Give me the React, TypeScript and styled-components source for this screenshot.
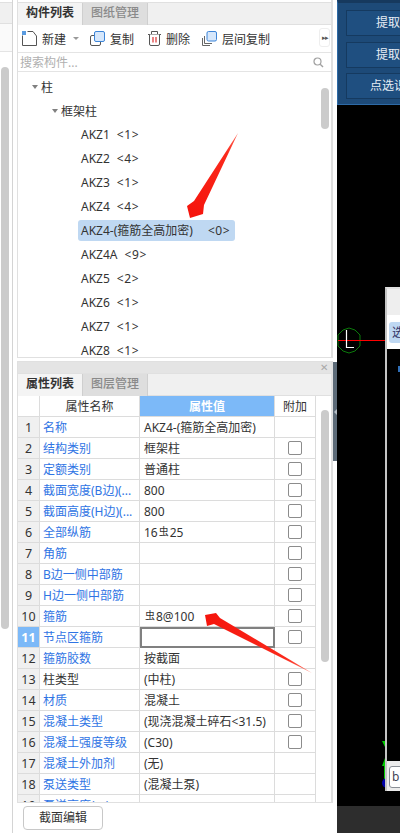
import React from "react";
import styled, { createGlobalStyle } from "styled-components";

const GlobalStyle = createGlobalStyle`
  html, body {
    margin: 0;
    padding: 0;
    height: 835px;
    overflow: hidden;
    background: #fff;
  }
  * {
    box-sizing: border-box;
  }
`;

const FONT = `"Noto Sans", "Noto Sans CJK SC", sans-serif`;

const Page = styled.div`
  position: relative;
  display: flex;
  width: 400px;
  height: 835px;
  overflow: hidden;
  font-family: ${FONT};
  font-size: 12px;
  color: #333;
  background: #fff;
`;

const LeftStrip = styled.div`
  width: 13px;
  height: 833px;
  flex: none;
  padding-top: 2px;
  background: #fff;
  border-right: 1px solid #d4d4d4;
  display: flex;
  flex-direction: column;
`;

const StripHead = styled.div`
  height: 22px;
  flex: none;
  background: #f0f0f0;
  border-top: 1px solid #e0e0e0;
  border-bottom: 1px solid #e0e0e0;
`;

const StripSub = styled.div`
  height: 28px;
  flex: none;
  background: #fafafa;
  border-bottom: 1px solid #e4e4e4;
`;

const StripBar = styled.div`
  width: 8px;
  height: 562px;
  margin: 15px 0 0 1px;
  border-radius: 4px;
  background: #cbcbcb;
`;

const Main = styled.div`
  width: 320px;
  flex: none;
  padding-left: 4px;
  display: flex;
  flex-direction: column;
`;

const Panel = styled.div`
  width: 316px;
  border: 1px solid #e0e0e0;
  border-top: none;
  border-right-width: 2px;
`;

const TopPanel = styled(Panel)`
  height: 358px;
  padding-top: 2px;
`;

const TabRow = styled.div`
  display: flex;
  height: 23px;
  background: #f0f0f0;
  border-top: 1px solid #e0e0e0;
  border-bottom: 1px solid #e0e0e0;
`;

const Tab = styled.div<{ $active?: boolean }>`
  width: 65px;
  height: 22px;
  line-height: 20px;
  text-align: center;
  font-size: 12px;
  font-weight: ${(p) => (p.$active ? 700 : 500)};
  color: ${(p) => (p.$active ? "#333" : "#8a8a8a")};
  background: ${(p) => (p.$active ? "#f4f4f4" : "#dedede")};
  border-right: 1px solid #cfcfcf;
`;

const Toolbar = styled.div`
  height: 28px;
  display: flex;
  align-items: center;
  padding-left: 4px;
  border-bottom: 1px solid #e4e4e4;
  position: relative;
`;

const ToolButton = styled.div<{ $gap: number }>`
  display: flex;
  align-items: center;
  gap: 5px;
  margin-right: ${(p) => p.$gap}px;
  white-space: nowrap;
  color: #333;
`;

const Caret = styled.span`
  display: inline-block;
  width: 0;
  height: 0;
  margin-left: 2px;
  border-left: 3px solid transparent;
  border-right: 3px solid transparent;
  border-top: 3px solid #999;
`;

const MoreButton = styled.div`
  position: absolute;
  right: 1px;
  top: 3px;
  width: 11px;
  height: 19px;
  border: 1px solid #eee;
  border-radius: 3px;
  font-size: 7px;
  line-height: 17px;
  text-align: center;
  color: #555;
  letter-spacing: -1px;
`;

const SearchRow = styled.div`
  height: 19px;
  display: flex;
  align-items: center;
  justify-content: space-between;
  padding: 0 7px 0 2px;
  color: #b0b0b0;
  border-bottom: 1px solid #e4e4e4;
`;

const Tree = styled.div`
  position: relative;
  height: 285px;
  overflow: hidden;
  padding-top: 3px;
`;

const TreeRow = styled.div<{ $indent: number }>`
  height: 24px;
  display: flex;
  align-items: center;
  padding-left: ${(p) => p.$indent}px;
  white-space: nowrap;
`;

const BranchRow = styled(TreeRow)`
  height: 23px;
`;

const TreeCaret = styled.span`
  width: 0;
  height: 0;
  margin-right: 3px;
  border-left: 3px solid transparent;
  border-right: 3px solid transparent;
  border-top: 4px solid #808080;
`;

const Item = styled.div<{ $selected?: boolean }>`
  display: flex;
  align-items: center;
  height: 21px;
  margin-left: ${(p) => (p.$selected ? -1 : 0)}px;
  padding: 0 ${(p) => (p.$selected ? 5 : 0)}px 0 ${(p) => (p.$selected ? 3 : 2)}px;
  border-radius: 3px;
  background: ${(p) => (p.$selected ? "#bfd8f2" : "transparent")};
`;

const Count = styled.span<{ $wide?: boolean }>`
  margin-left: ${(p) => (p.$wide ? 15 : 7)}px;
  letter-spacing: 0.6px;
`;

const TreeScroll = styled.div`
  position: absolute;
  right: 2px;
  top: 16px;
  width: 8px;
  height: 41px;
  border-radius: 4px;
  background: #cbcbcb;
`;

const PropsPanel = styled(Panel)`
  height: 442px;
  margin-top: 3px;
  display: flex;
  flex-direction: column;
  border-top: 1px solid #e0e0e0;
  border-bottom-width: 1px;
`;

const PanelHead = styled.div`
  height: 11px;
  flex: none;
  background: #e4e4e4;
  position: relative;
`;

const CloseMark = styled.span`
  position: absolute;
  right: 3px;
  top: -2px;
  font-size: 10px;
  line-height: 14px;
  color: #a8a8a8;
`;

const PropsBody = styled.div`
  flex: none;
  height: 407px;
  overflow: hidden;
  position: relative;
  border-bottom: 1px solid #e0e0e0;
`;

const Grid = styled.div`
  display: grid;
  grid-template-columns: 22px 100px 135px 41px;
  grid-auto-rows: 21px;
  width: 298px;
`;

const Cell = styled.div`
  display: flex;
  align-items: center;
  padding-left: 3px;
  white-space: nowrap;
  overflow: hidden;
  border-right: 1px solid #dcdcdc;
  border-bottom: 1px solid #dcdcdc;
`;

const HeadCell = styled(Cell)<{ $active?: boolean }>`
  justify-content: center;
  padding: 0;
  font-weight: ${(p) => (p.$active ? 700 : 400)};
  color: ${(p) => (p.$active ? "#fff" : "#333")};
  background: ${(p) => (p.$active ? "#7cb9f8" : "#fff")};
`;

const IndexCell = styled(Cell)<{ $active?: boolean }>`
  justify-content: center;
  padding: 0;
  font-size: 12.5px;
  font-weight: ${(p) => (p.$active ? 700 : 400)};
  color: ${(p) => (p.$active ? "#fff" : "#333")};
  background: ${(p) => (p.$active ? "#7cb9f8" : "#f0f0f0")};
`;

const NameCell = styled(Cell)<{ $plain?: boolean }>`
  color: ${(p) => (p.$plain ? "#333" : "#2f74e4")};
`;

const ValueCell = styled(Cell)<{ $editing?: boolean }>`
  padding-left: ${(p) => (p.$editing ? 0 : 4)}px;
  ${(p) => (p.$editing ? "border: 2px solid #808080;" : "")}
`;

const AddCell = styled(Cell)`
  justify-content: center;
  padding: 0;
`;

const Check = styled.span`
  width: 14px;
  height: 14px;
  border: 1px solid #8c8c8c;
  border-radius: 2px;
  background: #fff;
`;

const Steel = styled.span`
  font-size: 10px;
  line-height: 1;
  transform: translateY(-1px);
  margin: 0 1px;
`;

const PropsScroll = styled.div`
  position: absolute;
  right: 2px;
  top: 14px;
  width: 8px;
  height: 252px;
  border-radius: 4px;
  background: #cbcbcb;
`;

const EditButton = styled.div`
  width: 80px;
  height: 24px;
  margin: 3px 0 0 5px;
  border: 1px solid #c8c8c8;
  border-radius: 4px;
  text-align: center;
  line-height: 22px;
  color: #333;
  flex: none;
`;

const Gutter = styled.div`
  width: 4px;
  flex: none;
  position: relative;
  background: #fff;
`;

const Splitter = styled.div`
  position: absolute;
  left: 0;
  top: 362px;
  width: 4px;
  height: 99px;
  background: #5d6b78;

  &::after {
    content: "";
    position: absolute;
    left: 1px;
    top: 47px;
    border-top: 3px solid transparent;
    border-bottom: 3px solid transparent;
    border-right: 3px solid #b4bcc4;
  }
`;

const Canvas = styled.div`
  position: relative;
  flex: 1;
  height: 833px;
  background: #000;
  overflow: hidden;
`;

const CanvasFooter = styled.div`
  position: absolute;
  left: 0;
  right: 0;
  bottom: 0;
  height: 27px;
  background: #2d2d2d;
`;

const BluePanel = styled.div`
  position: absolute;
  left: 0;
  top: 0;
  width: 70px;
  height: 105px;
  padding: 7px 0 0 8px;
  background: #1d4a78;
  border: 1px solid #2d6aa6;
  border-top: 3px solid #16395e;
  display: flex;
  flex-direction: column;
  gap: 6px;
`;

const BlueButton = styled.div`
  width: 70px;
  height: 26px;
  flex: none;
  line-height: 24px;
  padding-left: 29px;
  white-space: nowrap;
  color: #e8eef5;
  background: #1f4f80;
  border: 1px solid #153a60;
`;

const BlueButtonWide = styled(BlueButton)`
  margin-top: -1px;
  padding-left: 23px;
`;

const SubWindow = styled.div`
  position: absolute;
  left: 48px;
  top: 287px;
  width: 30px;
  height: 504px;
  background: #000;
  border-left: 2px solid #c4c4c4;
  border-top: 2px solid #e0e0e0;
`;

const SubHead = styled.div`
  height: 26px;
  background: #eee;
`;

const SubTabRow = styled.div`
  height: 34px;
  padding: 7px 0 0 2px;
  background: #fff;
`;

const SubTab = styled.div`
  width: 30px;
  height: 21px;
  border-radius: 3px;
  background: #bfd8f2;
  color: #336;
  padding-left: 3px;
  line-height: 21px;
  white-space: nowrap;
  overflow: hidden;
`;

const SubDot = styled.span`
  position: absolute;
  left: 11px;
  top: 77px;
  width: 2px;
  height: 6px;
  background: #2f6fb8;
`;

const SubFoot = styled.div`
  position: absolute;
  left: 0;
  bottom: 0;
  width: 30px;
  height: 30px;
  background: #ececec;
  padding: 5px 0 0 2px;
`;

const SubFootBox = styled.div`
  width: 30px;
  height: 22px;
  border: 1px solid #8a8f96;
  border-radius: 3px;
  background: #fff;
  color: #445;
  padding-left: 2px;
  line-height: 20px;
`;

const CanvasMark = styled.svg`
  position: absolute;
  left: 0;
  top: 320px;
  display: block;
`;

const AxisMark = styled.svg`
  position: absolute;
  left: 40px;
  top: 735px;
  display: block;
`;

const ArrowLayer = styled.svg`
  position: absolute;
  left: 0;
  top: 0;
  pointer-events: none;
`;

type Row = {
  name: string;
  value?: React.ReactNode;
  check?: boolean;
  plain?: boolean;
  editing?: boolean;
};

const ROWS: Row[] = [
  { name: "名称", value: "AKZ4-(箍筋全高加密)" },
  { name: "结构类别", value: "框架柱", check: true },
  { name: "定额类别", value: "普通柱", check: true },
  { name: "截面宽度(B边)(...", value: "800", check: true },
  { name: "截面高度(H边)(...", value: "800", check: true },
  { name: "全部纵筋", value: <>16<Steel>虫</Steel>25</>, check: true },
  { name: "角筋", check: true },
  { name: "B边一侧中部筋", check: true },
  { name: "H边一侧中部筋", check: true },
  { name: "箍筋", value: <><Steel>虫</Steel>8@100</>, check: true },
  { name: "节点区箍筋", check: true, editing: true },
  { name: "箍筋胶数", value: "按截面" },
  { name: "柱类型", value: "(中柱)", check: true, plain: true },
  { name: "材质", value: "混凝土", check: true },
  { name: "混凝土类型", value: "(现浇混凝土碎石<31.5)", check: true },
  { name: "混凝土强度等级", value: "(C30)", check: true },
  { name: "混凝土外加剂", value: "(无)" },
  { name: "泵送类型", value: "(混凝土泵)" },
  { name: "泵送高度(m)" },
];

const ITEMS = [
  ["AKZ1", "<1>"],
  ["AKZ2", "<4>"],
  ["AKZ3", "<1>"],
  ["AKZ4", "<4>"],
  ["AKZ4-(箍筋全高加密)", "<0>"],
  ["AKZ4A", "<9>"],
  ["AKZ5", "<2>"],
  ["AKZ6", "<1>"],
  ["AKZ7", "<1>"],
  ["AKZ8", "<1>"],
];

const NewIcon = () => (
  <svg width="15" height="15" viewBox="0 0 15 15">
    <path d="M0.5 4.5V14.5H14.5V5L11 0.5H5.5" fill="#fff" stroke="#555" />
    <rect x="0" y="0" width="4" height="4" fill="#5a9be0" />
  </svg>
);

const CopyIcon = () => (
  <svg width="15" height="15" viewBox="0 0 15 15">
    <rect x="0.5" y="4.5" width="10" height="10" rx="1.5" fill="#fff" stroke="#555" />
    <rect x="4.5" y="0.5" width="10" height="10" rx="1.5" fill="#d6e7fb" stroke="#3d85d8" />
  </svg>
);

const TrashIcon = () => (
  <svg width="13" height="15" viewBox="0 0 13 15">
    <path d="M0 3.5H13M3.5 3V0.5H9.5V3" fill="none" stroke="#555" />
    <path d="M1.5 3.5V13a1.5 1.5 0 0 0 1.5 1.5H10a1.5 1.5 0 0 0 1.5-1.5V3.5" fill="#fff" stroke="#555" />
    <path d="M5 6V11.5M8 6V11.5" stroke="#d33" strokeWidth="1.2" />
  </svg>
);

const FloorCopyIcon = () => (
  <svg width="15" height="15" viewBox="0 0 15 15">
    <path d="M0.5 7V14.5H8M2.5 5V12.5H10" fill="none" stroke="#666" />
    <rect x="5" y="0.5" width="9.5" height="9.5" rx="1.5" fill="#d6e7fb" stroke="#3d85d8" />
  </svg>
);

const SearchIcon = () => (
  <svg width="11" height="11" viewBox="0 0 11 11">
    <circle cx="4.5" cy="4.5" r="3.5" fill="none" stroke="#a0a0a0" strokeWidth="1.2" />
    <path d="M7.2 7.2L10 10" stroke="#a0a0a0" strokeWidth="1.4" />
  </svg>
);

export default function App() {
  return (
    <Page>
      <GlobalStyle />
      <LeftStrip>
        <StripHead />
        <StripSub />
        <StripBar />
      </LeftStrip>
      <Main>
        <TopPanel>
          <TabRow>
            <Tab $active>构件列表</Tab>
            <Tab>图纸管理</Tab>
          </TabRow>
          <Toolbar>
            <ToolButton $gap={11}>
              <NewIcon />
              新建
              <Caret />
            </ToolButton>
            <ToolButton $gap={14}>
              <CopyIcon />
              复制
            </ToolButton>
            <ToolButton $gap={12}>
              <TrashIcon />
              删除
            </ToolButton>
            <ToolButton $gap={0}>
              <FloorCopyIcon />
              层间复制
            </ToolButton>
            <MoreButton>▸▸</MoreButton>
          </Toolbar>
          <SearchRow>
            搜索构件...
            <SearchIcon />
          </SearchRow>
          <Tree>
            <TreeRow $indent={14}>
              <TreeCaret />柱
            </TreeRow>
            <BranchRow $indent={34}>
              <TreeCaret />框架柱
            </BranchRow>
            {ITEMS.map(([name, count], i) => (
              <TreeRow $indent={61} key={name}>
                <Item $selected={i === 4}>
                  {name}
                  <Count $wide={i === 4}>{count}</Count>
                </Item>
              </TreeRow>
            ))}
            <TreeScroll />
          </Tree>
        </TopPanel>
        <PropsPanel>
          <PanelHead>
            <CloseMark>✕</CloseMark>
          </PanelHead>
          <TabRow>
            <Tab $active>属性列表</Tab>
            <Tab>图层管理</Tab>
          </TabRow>
          <PropsBody>
            <Grid>
              <HeadCell />
              <HeadCell>属性名称</HeadCell>
              <HeadCell $active>属性值</HeadCell>
              <HeadCell>附加</HeadCell>
              {ROWS.map((row, i) => (
                <React.Fragment key={row.name}>
                  <IndexCell $active={row.editing}>{i + 1}</IndexCell>
                  <NameCell $plain={row.plain}>{row.name}</NameCell>
                  <ValueCell $editing={row.editing}>{row.value}</ValueCell>
                  <AddCell>{row.check && <Check />}</AddCell>
                </React.Fragment>
              ))}
            </Grid>
            <PropsScroll />
          </PropsBody>
          <EditButton>截面编辑</EditButton>
        </PropsPanel>
      </Main>
      <Gutter>
        <Splitter />
      </Gutter>
      <Canvas>
        <BluePanel>
          <BlueButton>提取</BlueButton>
          <BlueButton>提取</BlueButton>
          <BlueButtonWide>点选识</BlueButtonWide>
        </BluePanel>
        <CanvasMark width="63" height="42" viewBox="0 0 63 42">
          <polygon
            points="12,8 18,10 23,15 23,26 18,31 12,33 6,31 1,26 1,15 6,10"
            fill="none"
            stroke="#0b7a0b"
          />
          <path d="M1 20.5H63" stroke="#f00" />
          <path d="M9.5 10V27.5H17" fill="none" stroke="#fff" strokeWidth="1.2" />
        </CanvasMark>
        <AxisMark width="12" height="55" viewBox="0 0 12 55">
          <path d="M5 6H8V12ZM8 23L5 31H8Z" fill="#0c0" />
          <path d="M7.5 31V45" stroke="#0c0" />
          <circle cx="10" cy="48" r="5" fill="#00a" />
        </AxisMark>
        <SubWindow>
          <SubHead />
          <SubTabRow>
            <SubTab>选</SubTab>
          </SubTabRow>
          <SubDot />
          <SubFoot>
            <SubFootBox>b</SubFootBox>
          </SubFoot>
        </SubWindow>
        <CanvasFooter />
      </Canvas>
      <ArrowLayer width="400" height="835" viewBox="0 0 400 835">
        <defs>
          <linearGradient id="tailA" x1="238" y1="132" x2="190" y2="216" gradientUnits="userSpaceOnUse">
            <stop offset="0" stopColor="#ff6a5a" />
            <stop offset="0.25" stopColor="#fb2a1c" />
            <stop offset="1" stopColor="#f5140c" />
          </linearGradient>
          <linearGradient id="tailB" x1="312" y1="673" x2="206" y2="615" gradientUnits="userSpaceOnUse">
            <stop offset="0" stopColor="#ff7a6a" />
            <stop offset="0.25" stopColor="#fb2a1c" />
            <stop offset="1" stopColor="#f5140c" />
          </linearGradient>
        </defs>
        <polygon points="238,133 204,205 203,214 190,218 187,206 194,201" fill="url(#tailA)" />
        <polygon points="312,673 220,618 216,613 205,615 207,626 214,624" fill="url(#tailB)" />
      </ArrowLayer>
    </Page>
  );
}
